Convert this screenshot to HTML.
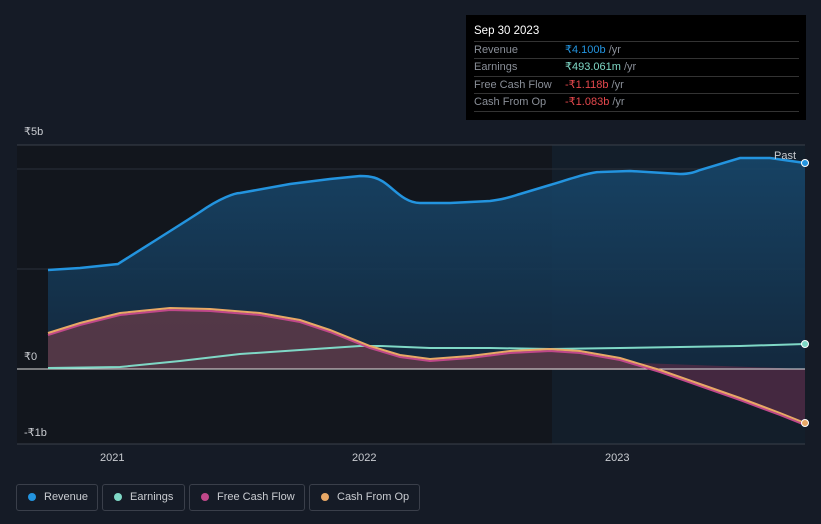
<!DOCTYPE html>
<html><head><meta charset="utf-8"><style>
body{margin:0;width:821px;height:524px;background:#151b26;font-family:"Liberation Sans",sans-serif;overflow:hidden;position:relative}
.tt{position:absolute;left:466px;top:15px;width:340px;height:105px;background:#000;color:#fff;font-size:11px}
.tt .h{position:absolute;left:8px;top:10px;font-size:11.5px}
.row{position:absolute;left:8px;width:325px;border-top:1px solid #333;height:17px;line-height:17px;color:#8a8f98}
.row span{position:absolute;left:91px}
.leg{position:absolute;top:484px;height:27px;border:1px solid #3a3f4a;border-radius:3px;color:#c9ccd1;font-size:11px;line-height:25px;box-sizing:border-box}
.leg i{position:absolute;left:11px;top:8px;width:8px;height:8px;border-radius:50%}
.leg b{font-weight:normal;position:absolute;left:27px}
.ax{position:absolute;color:#c9ccd1;font-size:11px}
</style></head><body>
<svg width="821" height="524" style="position:absolute;left:0;top:0">
<defs><linearGradient id="g" x1="0" y1="0" x2="0" y2="1"><stop offset="0" stop-color="#17466a"/><stop offset="1" stop-color="#132a40"/></linearGradient></defs>
<rect x="17" y="145" width="535" height="299" fill="#12161d"/>
<rect x="552" y="145" width="253" height="299" fill="#131e2a"/>
<line x1="17" y1="145" x2="805" y2="145" stroke="#3a404a"/>
<line x1="17" y1="169" x2="805" y2="169" stroke="#2a303a"/>
<line x1="17" y1="269" x2="805" y2="269" stroke="#2a303a"/>
<line x1="17" y1="444" x2="805" y2="444" stroke="#3a404a"/>
<path d="M48,270 L80,268 L118,264 C140,250 180,225 200,212 C220,198 235,193 240,193 L290,184 L330,179 L360,176 C372,176 378,178 385,183 C395,190 405,203 420,203 L450,203 L490,201 C505,199 510,197 520,194 L550,185 C570,179 590,172 600,172 L630,171 L680,174 C690,174 695,172 700,170 L740,158 L770,158 L805,163 L805,369 L48,369Z" fill="url(#g)" opacity="0.9"/>
<path d="M48,333 L80,323 L120,313 L170,308 L210,309 L260,313 L300,320 L330,330 L370,346 L400,355 L430,359 L470,356 L510,351 L550,349 L580,351 L620,358 L660,370 L48,369Z" fill="#5e3a48" opacity="0.85"/>
<path d="M640,363 L660,370 L700,384 L740,398 L780,413 L805,423 L805,369Z" fill="#4e2a44" opacity="0.85"/>
<line x1="17" y1="369" x2="805" y2="369" stroke="#e0e0e0"/>
<path d="M48,270 L80,268 L118,264 C140,250 180,225 200,212 C220,198 235,193 240,193 L290,184 L330,179 L360,176 C372,176 378,178 385,183 C395,190 405,203 420,203 L450,203 L490,201 C505,199 510,197 520,194 L550,185 C570,179 590,172 600,172 L630,171 L680,174 C690,174 695,172 700,170 L740,158 L770,158 L805,163" fill="none" stroke="#2394df" stroke-width="2.5"/>
<path d="M48,368 L120,367 L180,361 L240,354 L300,350 L360,346 L380,346 L430,348 L490,348 L550,349 L620,348 L680,347 L740,346 L805,344" fill="none" stroke="#7fd8c6" stroke-width="2"/>
<path d="M48,335 L80,325 L120,315 L170,310 L210,311 L260,315 L300,322 L330,332 L370,348 L400,357 L430,361 L470,358 L510,353 L550,351 L580,353 L620,360 L660,372 L700,386 L740,400 L780,415 L805,425" fill="none" stroke="#c0488a" stroke-width="2"/>
<path d="M48,333 L80,323 L120,313 L170,308 L210,309 L260,313 L300,320 L330,330 L370,346 L400,355 L430,359 L470,356 L510,351 L550,349 L580,351 L620,358 L660,370 L700,384 L740,398 L780,413 L805,423" fill="none" stroke="#e8a866" stroke-width="2"/>
<circle cx="805" cy="163" r="3.5" fill="#2394df" stroke="#fff"/>
<circle cx="805" cy="344" r="3.5" fill="#7fd8c6" stroke="#fff"/>
<circle cx="805" cy="423" r="3.5" fill="#e8a866" stroke="#fff"/>
</svg>
<div class="ax" style="left:24px;top:125px">₹5b</div>
<div class="ax" style="left:24px;top:350px">₹0</div>
<div class="ax" style="left:24px;top:426px">-₹1b</div>
<div class="ax" style="left:774px;top:150px">Past</div>
<div class="ax" style="left:100px;top:452px">2021</div>
<div class="ax" style="left:352px;top:452px">2022</div>
<div class="ax" style="left:605px;top:452px">2023</div>
<div class="tt"><div class="h">Sep 30 2023</div>
<div class="row" style="top:26px">Revenue<span><a style="color:#2394df">₹4.100b</a> /yr</span></div>
<div class="row" style="top:43px">Earnings<span><a style="color:#7fd8c6">₹493.061m</a> /yr</span></div>
<div class="row" style="top:61px">Free Cash Flow<span><a style="color:#e5484d">-₹1.118b</a> /yr</span></div>
<div class="row" style="top:78px;border-bottom:1px solid #333">Cash From Op<span><a style="color:#e5484d">-₹1.083b</a> /yr</span></div>
</div>
<div class="leg" style="left:16px;width:82px"><i style="background:#2394df"></i><b>Revenue</b></div>
<div class="leg" style="left:102px;width:83px"><i style="background:#7fd8c6"></i><b>Earnings</b></div>
<div class="leg" style="left:189px;width:116px"><i style="background:#c0488a"></i><b>Free Cash Flow</b></div>
<div class="leg" style="left:309px;width:111px"><i style="background:#e8a866"></i><b>Cash From Op</b></div>
</body></html>
